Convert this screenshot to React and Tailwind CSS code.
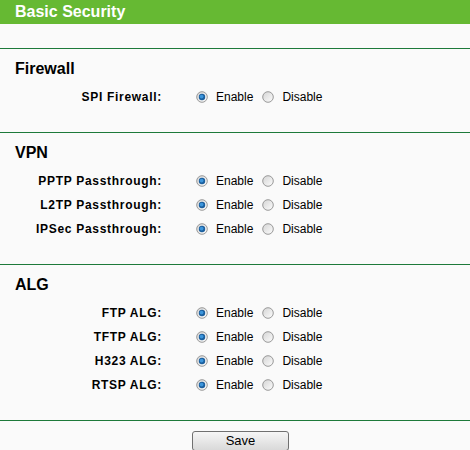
const sections = [
  { title: "Firewall", rows: ["SPI Firewall:"] },
  { title: "VPN", rows: ["PPTP Passthrough:", "L2TP Passthrough:", "IPSec Passthrough:"] },
  { title: "ALG", rows: ["FTP ALG:", "TFTP ALG:", "H323 ALG:", "RTSP ALG:"] },
];

function Radio({ checked }) {
  return (
    <svg width="12" height="12" viewBox="0 0 12 12" className="shrink-0">
      <defs>
        <linearGradient id={checked ? "rg-on" : "rg-off"} x1="0" y1="0" x2="1" y2="1">
          <stop offset="0" stopColor="#d4d4d4" />
          <stop offset="1" stopColor="#fdfdfd" />
        </linearGradient>
      </defs>
      <circle cx="6" cy="6" r="5.3" fill={`url(#${checked ? "rg-on" : "rg-off"})`} stroke="#8f8f8f" strokeWidth="0.9" />
      {checked && (
        <>
          <circle cx="6" cy="6" r="3.2" fill="#1b5f9e" />
          <circle cx="5.6" cy="5.6" r="1.9" fill="#3d96dc" />
        </>
      )}
    </svg>
  );
}

function Row({ label }) {
  return (
    <div className="flex h-6 items-center">
      <div className="w-[162px] text-right text-[12px] font-bold tracking-[0.7px] text-black">{label}</div>
      <div className="ml-[34px] flex items-center">
        <Radio checked />
        <span className="ml-[8px] text-[12px] text-black">Enable</span>
        <span className="ml-[9px]">
          <Radio />
        </span>
        <span className="ml-[8px] text-[12px] text-black">Disable</span>
      </div>
    </div>
  );
}

export default function App() {
  return (
    <div className="h-[450px] w-[470px] bg-[#fafafa]" style={{ fontFamily: '"Liberation Sans", Arial, sans-serif' }}>
      <div className="h-6 bg-[#66b933] pl-[15px] text-[16px] font-bold leading-6 text-white">Basic Security</div>
      <div className="h-6" />
      {sections.map((s) => (
        <div key={s.title} className="border-t border-[#1d7a3a] pt-[10px] pb-[23px]">
          <div className="h-5 pl-[15px] text-[16px] font-bold leading-5 text-black">{s.title}</div>
          <div className="mt-[6px]">
            {s.rows.map((r) => (
              <Row key={r} label={r} />
            ))}
          </div>
        </div>
      ))}
      <div className="border-t border-[#1d7a3a] pl-[192px] pt-[7px]">
        <button className="h-5 w-[97px] rounded-[3px] border border-[#707070] bg-gradient-to-b from-[#f6f6f6] to-[#d9d9d9] text-[13px] leading-4 text-black">
          Save
        </button>
      </div>
    </div>
  );
}
